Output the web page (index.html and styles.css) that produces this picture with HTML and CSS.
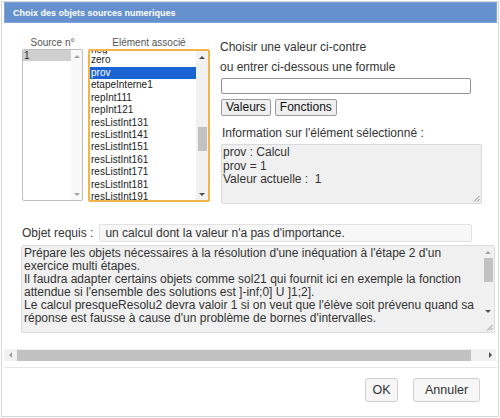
FILE: index.html
```html
<!DOCTYPE html>
<html lang="fr">
<head>
<meta charset="utf-8">
<title>Choix des objets sources numeriques</title>
<link rel="stylesheet" href="styles.css">
</head>
<body>
<div class="dialog">
  <div class="titlebar">Choix des objets sources numeriques</div>
  <div class="body">
    <div class="top">
      <div class="col col-source">
        <div class="col-label">Source n°</div>
        <div class="listbox lb-source">
          <div class="lb-items">
            <div class="lb-item sel-gray">1</div>
          </div>
          <div class="vscroll sb-light">
            <div class="sb-btn"><span class="tri tri-up off"></span></div>
            <div class="sb-track"></div>
            <div class="sb-btn"><span class="tri tri-down off"></span></div>
          </div>
        </div>
      </div>
      <div class="col col-element">
        <div class="col-label">Elément associé</div>
        <div class="listbox lb-element">
          <div class="lb-items">
            <div class="lb-shift">
              <div class="lb-item lb-partial">neg</div>
              <div class="lb-item">zero</div>
              <div class="lb-item sel-blue">prov</div>
              <div class="lb-item">etapeInterne1</div>
              <div class="lb-item">repInt111</div>
              <div class="lb-item">repInt121</div>
              <div class="lb-item">resListInt131</div>
              <div class="lb-item">resListInt141</div>
              <div class="lb-item">resListInt151</div>
              <div class="lb-item">resListInt161</div>
              <div class="lb-item">resListInt171</div>
              <div class="lb-item">resListInt181</div>
              <div class="lb-item">resListInt191</div>
            </div>
          </div>
          <div class="vscroll">
            <div class="sb-btn"><span class="tri tri-up"></span></div>
            <div class="sb-track"><div class="sb-thumb thumb-element"></div></div>
            <div class="sb-btn"><span class="tri tri-down"></span></div>
          </div>
        </div>
      </div>
      <div class="col col-right">
        <div class="prompt prompt-first">Choisir une valeur ci-contre</div>
        <div class="prompt prompt-second">ou entrer ci-dessous une formule</div>
        <div class="formula"></div>
        <div class="btn-row">
          <button class="btn" type="button">Valeurs</button>
          <button class="btn" type="button">Fonctions</button>
        </div>
        <div class="info-label">Information sur l'élément sélectionné :</div>
        <div class="info-box">
          <div>prov : Calcul</div>
          <div>prov = 1</div>
          <div>Valeur actuelle :&nbsp; 1</div>
          <svg class="resizer" width="7" height="7" viewBox="0 0 7 7"><path d="M6.5 1 L1 6.5 M6.5 4 L4 6.5" stroke="#8a8a8a" stroke-width="1" fill="none"/></svg>
        </div>
      </div>
    </div>
    <div class="req">
      <div class="req-label">Objet requis :</div>
      <div class="req-input">un calcul dont la valeur n'a pas d'importance.</div>
    </div>
    <div class="desc">
      <div class="desc-text">
        <div>Prépare les objets nécessaires à la résolution d'une inéquation à l'étape 2 d'un</div>
        <div>exercice multi étapes.</div>
        <div>Il faudra adapter certains objets comme sol21 qui fournit ici en exemple la fonction</div>
        <div>attendue si l'ensemble des solutions est ]-inf;0] U ]1;2].</div>
        <div>Le calcul presqueResolu2 devra valoir 1 si on veut que l'élève soit prévenu quand sa</div>
        <div>réponse est fausse à cause d'un problème de bornes d'intervalles.</div>
      </div>
      <div class="vscroll desc-scroll">
        <div class="sb-btn"><span class="tri tri-up off"></span></div>
        <div class="sb-track"><div class="sb-thumb thumb-desc"></div></div>
        <div class="sb-btn"><span class="tri tri-down"></span></div>
        <div class="sb-corner">
          <svg width="7" height="7" viewBox="0 0 7 7"><path d="M6.5 1 L1 6.5 M6.5 4 L4 6.5" stroke="#8a8a8a" stroke-width="1" fill="none"/></svg>
        </div>
      </div>
    </div>
    <div class="hscroll">
      <div class="hsb-btn"><span class="tri tri-left off"></span></div>
      <div class="hsb-track"><div class="hsb-thumb"></div></div>
      <div class="hsb-btn"><span class="tri tri-right"></span></div>
    </div>
  </div>
  <div class="footer">
    <button class="fbtn fbtn-ok" type="button">OK</button>
    <button class="fbtn fbtn-cancel" type="button">Annuler</button>
  </div>
</div>
</body>
</html>
```
FILE: styles.css
```css
* { box-sizing: border-box; }
body {
  margin: 0;
  background: #fff;
  font-family: "Liberation Sans", Arial, sans-serif;
  color: #333;
}
.dialog {
  margin: 1px 0 0 1px;
  width: 498px;
  height: 416px;
  border: 1px solid #d6d6d6;
  padding: 0 1px 0 2px;
  display: flex;
  flex-direction: column;
}
.titlebar {
  height: 21px;
  background: #6592ce;
  border: 1px solid #80a4d8;
  color: #fff;
  font-weight: bold;
  font-size: 9px;
  line-height: 19px;
  padding: 1px 0 0 8px;
  white-space: nowrap;
}
.body { padding-top: 13px; }
.top {
  display: flex;
  align-items: flex-start;
  padding-left: 18px;
}
.col-source { width: 61px; }
.col-element { width: 122px; margin-left: 5px; }
.col-right { width: 265px; margin-left: 9px; }
.col-label {
  font-size: 10px;
  line-height: 13px;
  text-align: center;
  white-space: nowrap;
  color: #555;
}
.listbox {
  display: flex;
  height: 152px;
  border: 1px solid #bdbdbd;
  border-radius: 2px;
  background: #fff;
  overflow: hidden;
}
.lb-element {
  height: 153px;
  border: 2px solid #f2b34a;
}
.lb-items {
  flex: 1;
  overflow: hidden;
  font-size: 10px;
  line-height: 12.45px;
  color: #222;
}
.lb-shift { padding-top: 3.25px; }
.lb-partial {
  height: 0;
  line-height: 0;
  overflow: visible;
  transform: translateY(-4px);
  clip-path: inset(0 0 -4px 0);
}
.lb-item {
  padding-left: 1px;
  white-space: nowrap;
}
.sel-gray { background: #cfcfcf; height: 11px; line-height: 11px; }
.sel-blue { background: #1a63d3; color: #fff; }
.vscroll {
  width: 12px;
  display: flex;
  flex-direction: column;
  background: #f1f1f1;
}
.lb-source .vscroll { width: 11px; }
.sb-light { background: #f8f8f8; }
.sb-btn {
  height: 12px;
  display: flex;
  align-items: center;
  justify-content: center;
  flex-shrink: 0;
}
.sb-track { flex: 1; }
.sb-thumb {
  margin: 0 auto;
  width: 9px;
  background: #c1c1c1;
}
.thumb-element { margin-top: 64px; height: 24px; }
.thumb-desc { margin-top: 0; height: 24px; }
.tri { width: 0; height: 0; display: block; }
.tri-up {
  border-left: 3px solid transparent;
  border-right: 3px solid transparent;
  border-bottom: 3px solid #505050;
}
.tri-down {
  border-left: 3px solid transparent;
  border-right: 3px solid transparent;
  border-top: 3px solid #505050;
}
.tri-left {
  border-top: 3px solid transparent;
  border-bottom: 3px solid transparent;
  border-right: 3px solid #505050;
}
.tri-right {
  border-top: 3px solid transparent;
  border-bottom: 3px solid transparent;
  border-left: 3px solid #505050;
}
.tri-up.off { border-bottom-color: #a3a3a3; }
.tri-down.off { border-top-color: #a3a3a3; }
.tri-left.off { border-right-color: #a3a3a3; }

.prompt {
  font-size: 12px;
  line-height: 14px;
  padding-left: 1px;
  white-space: nowrap;
}
.prompt-first { margin-top: 4px; }
.prompt-second { margin-top: 6px; }
.formula {
  margin: 4px 0 0 2px;
  width: 250px;
  height: 16px;
  border: 1px solid #909090;
  border-radius: 2px;
  background: #fff;
}
.btn-row {
  margin: 5px 0 0 2px;
  display: flex;
  gap: 4px;
}
.btn {
  height: 17px;
  margin: 0;
  padding: 0 4px;
  font-family: "Liberation Sans", Arial, sans-serif;
  font-size: 12px;
  line-height: 15px;
  color: #111;
  background: #efefef;
  border: 1px solid #9a9a9a;
  border-radius: 2px;
}
.info-label {
  margin-top: 10px;
  font-size: 12px;
  line-height: 14px;
  padding-left: 3px;
  white-space: nowrap;
}
.info-box {
  position: relative;
  margin: 4px 0 0 2px;
  width: 261px;
  height: 60px;
  background: #f0f0f0;
  border: 1px solid #dadada;
  border-radius: 2px;
  padding: 1px 1px;
  font-size: 12px;
  line-height: 13.5px;
  color: #333;
  white-space: nowrap;
}
.resizer {
  position: absolute;
  right: 1px;
  bottom: 1px;
}
.req {
  display: flex;
  align-items: center;
  margin-top: 20px;
  padding-left: 18px;
}
.req-label {
  font-size: 12px;
  line-height: 14px;
  white-space: nowrap;
}
.req-input {
  margin-left: 6px;
  width: 373px;
  height: 18px;
  border: 1px solid #e2e2e2;
  border-radius: 2px;
  background: #f7f7f7;
  padding-left: 5px;
  font-size: 12px;
  line-height: 16px;
  white-space: nowrap;
  color: #333;
}
.desc {
  display: flex;
  margin: 3px 0 0 17px;
  width: 474px;
  height: 88px;
  border: 1px solid #dcdcdc;
  border-radius: 2px;
  background: #f0f0f0;
}
.desc-text {
  flex: 1;
  overflow: hidden;
  padding: 1px 0 0 2px;
  font-size: 12px;
  line-height: 13px;
  white-space: nowrap;
  color: #333;
}
.desc-scroll { background: #f1f1f1; }
.sb-corner {
  height: 15px;
  flex-shrink: 0;
  display: flex;
  align-items: flex-end;
  justify-content: flex-end;
  padding: 0 1px 1px 0;
  background: #f0f0f0;
}
.hscroll {
  display: flex;
  margin-top: 16px;
  height: 12px;
  width: 492px;
  background: #f1f1f1;
}
.hsb-btn {
  width: 12px;
  flex-shrink: 0;
  display: flex;
  align-items: center;
  justify-content: center;
}
.hsb-track { flex: 1; display: flex; align-items: center; }
.hsb-thumb {
  margin-left: 1px;
  width: 454px;
  height: 11px;
  background: #c1c1c1;
}
.footer {
  margin-top: 6px;
  border-top: 1px solid #e6e6e6;
  padding: 10px 17px 0 0;
  display: flex;
  justify-content: flex-end;
  gap: 15px;
}
.fbtn {
  height: 24px;
  margin: 0;
  padding: 0;
  font-family: "Liberation Sans", Arial, sans-serif;
  font-size: 12.5px;
  color: #333;
  background: #f6f6f6;
  border: 1px solid #d0d0d0;
  border-radius: 3px;
}
.fbtn-ok { width: 33px; }
.fbtn-cancel { width: 67px; }
```
